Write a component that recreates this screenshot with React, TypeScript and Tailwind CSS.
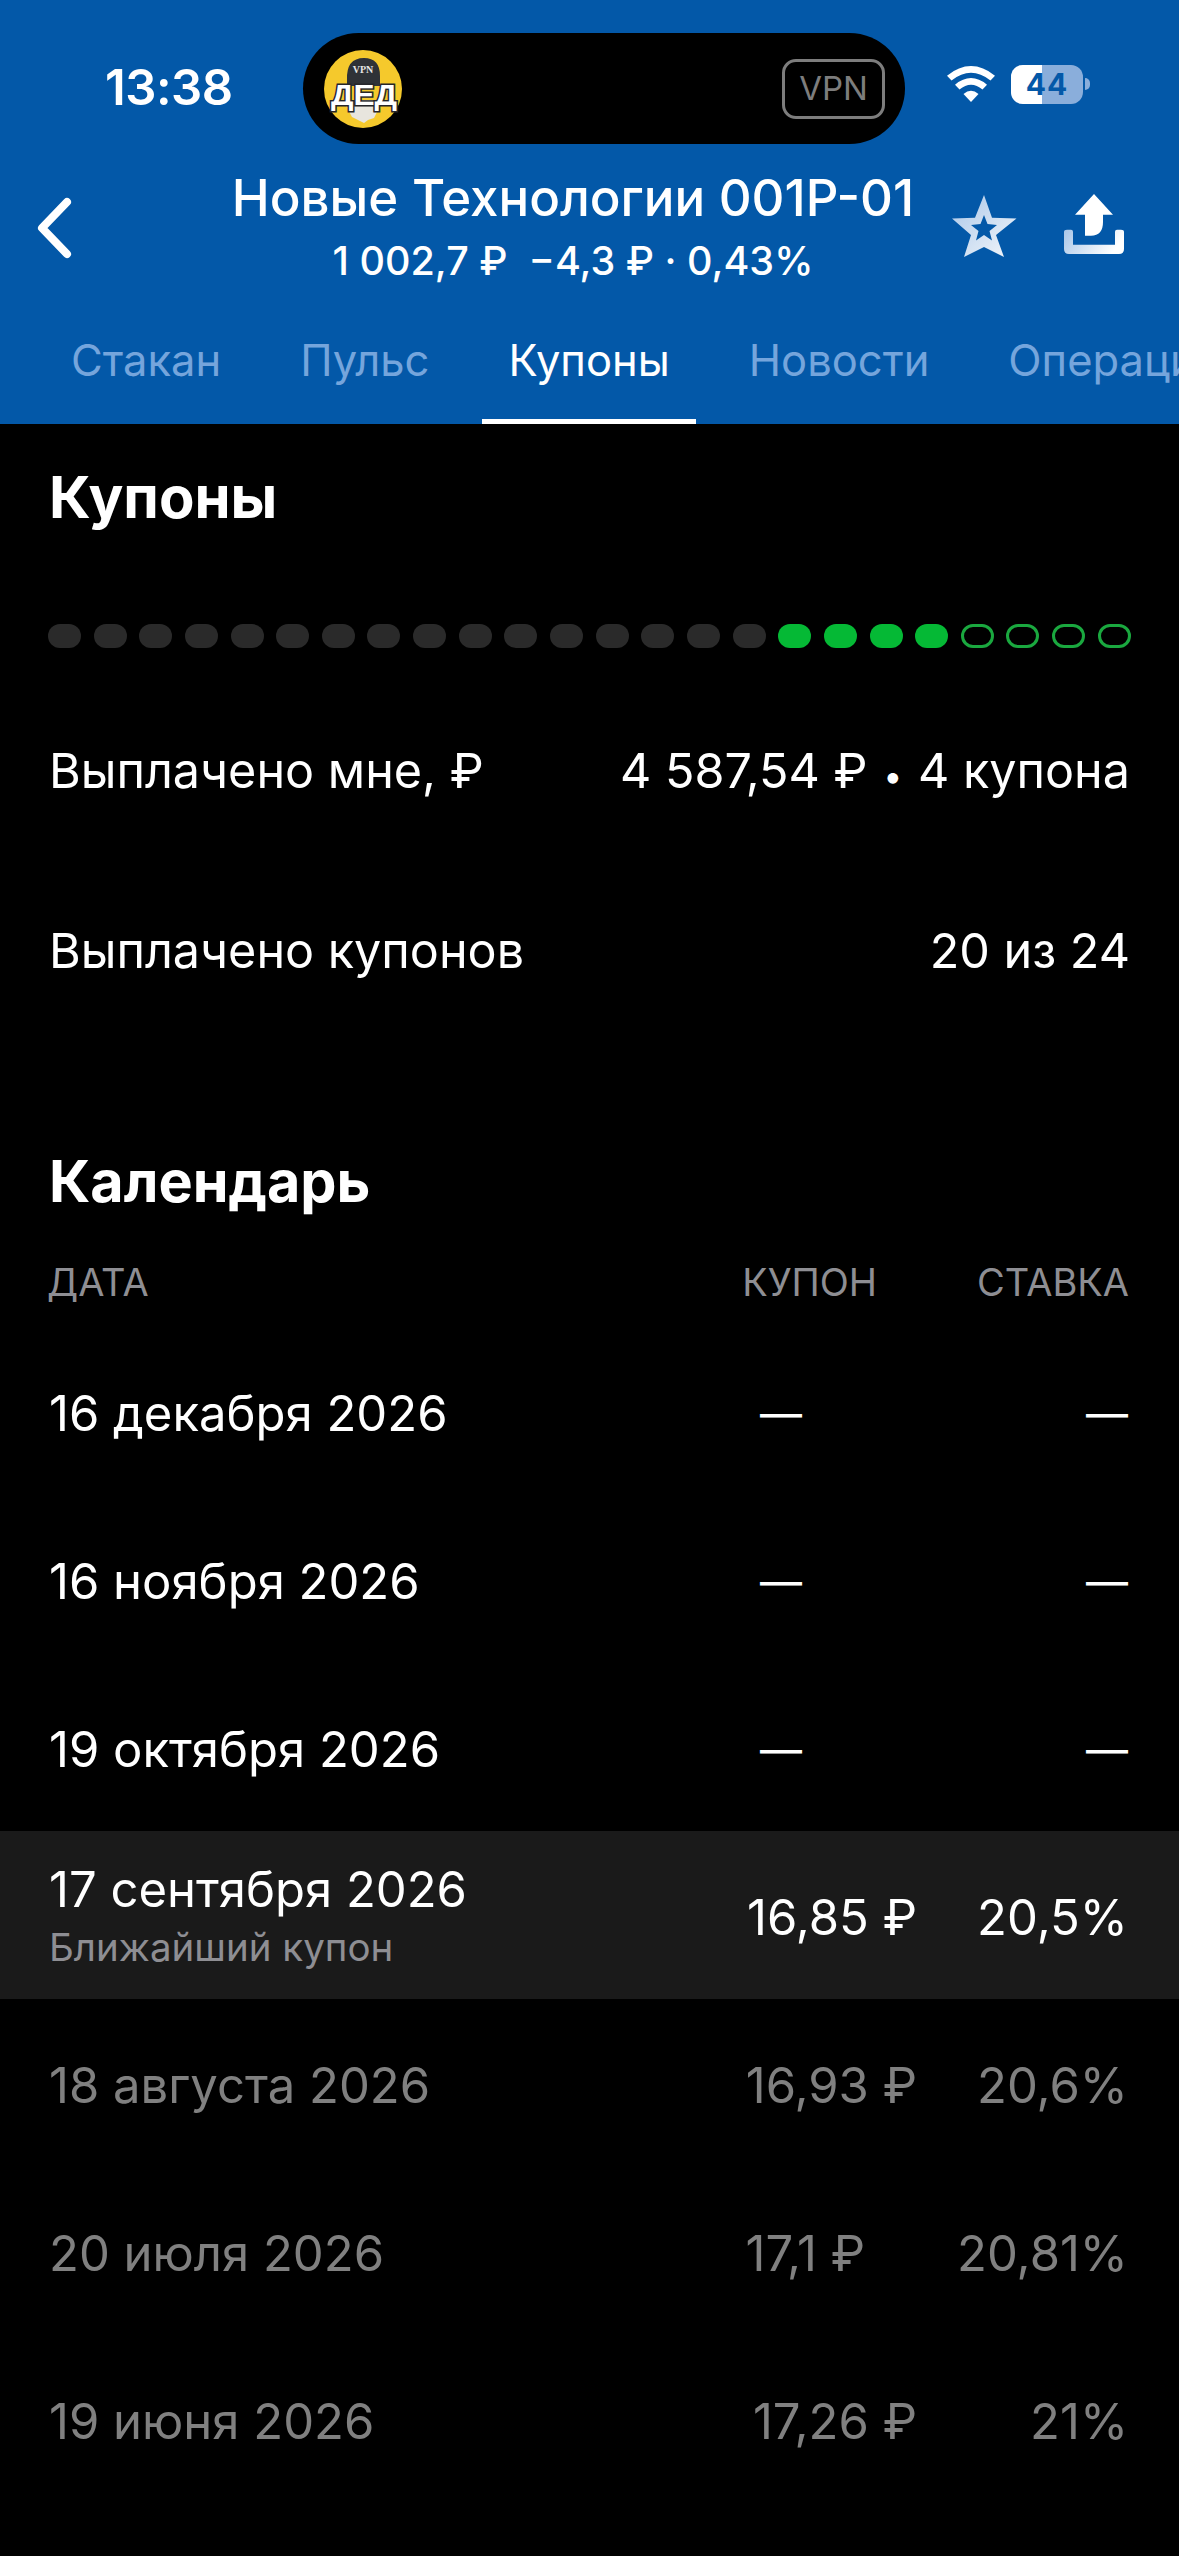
import React from "react";

const FONT = "font-['Inter','Noto_Sans',sans-serif]";

type Row = { date: string; sub?: string; coupon: string; rate: string; tone: "white" | "dim"; couponClass: string };

const rows: Row[] = [
  { date: "16 декабря 2026", coupon: "—", rate: "—", tone: "white", couponClass: "mr-[115px] text-[42px]" },
  { date: "16 ноября 2026", coupon: "—", rate: "—", tone: "white", couponClass: "mr-[115px] text-[42px]" },
  { date: "19 октября 2026", coupon: "—", rate: "—", tone: "white", couponClass: "mr-[115px] text-[42px]" },
  { date: "17 сентября 2026", sub: "Ближайший купон", coupon: "16,85 ₽", rate: "20,5%", tone: "white", couponClass: "mr-0" },
  { date: "18 августа 2026", coupon: "16,93 ₽", rate: "20,6%", tone: "dim", couponClass: "mr-0" },
  { date: "20 июля 2026", coupon: "17,1 ₽", rate: "20,81%", tone: "dim", couponClass: "mr-[52px]" },
  { date: "19 июня 2026", coupon: "17,26 ₽", rate: "21%", tone: "dim", couponClass: "mr-0" },
];

function Avatar() {
  return (
    <svg width="78" height="78" viewBox="0 0 78 78" className="shrink-0">
      <circle cx="39" cy="39" r="39" fill="#f5c92c" />
      <path d="M19 50 L59 50 L50 68 L44 70 L40 73 L36 71 L28 67 Z" fill="#e8e5de" />
      <path d="M23 30 Q22 8 40 8 Q56 8 56 26 L56 36 L23 36 Z" fill="#2f3237" />
      <text x="39" y="23" textAnchor="middle" fontSize="10" fontWeight="700" fill="#e6e6e6" fontFamily="'Liberation Serif',serif">VPN</text>
      <text x="40" y="55" textAnchor="middle" fontSize="30" fontWeight="900" fill="#ffffff" stroke="#26262a" strokeWidth="3" paintOrder="stroke" fontFamily="'Liberation Sans',sans-serif" textLength="66" lengthAdjust="spacingAndGlyphs">ДЕД</text>
    </svg>
  );
}

function Wifi() {
  return (
    <svg width="48" height="36" viewBox="0 0 48 36" className="shrink-0">
      <path d="M24 36 L16.500 28 Q24 21.500 31.500 28 Z" fill="#fff" />
      <path d="M12.500 23.500 L8 18.700 Q24 5.500 40 18.700 L35.500 23.500 Q24 14 12.500 23.500 Z" fill="#fff" />
      <path d="M4.500 14.500 L0 9.700 Q24 -9.500 48 9.700 L43.500 14.500 Q24 -1 4.500 14.500 Z" fill="#fff" />
    </svg>
  );
}

function Battery() {
  return (
    <div className="flex items-center shrink-0">
      <div className="relative w-[72px] h-[39px] rounded-[12px] overflow-hidden bg-[#8aaedb] flex">
        <div className="w-[31px] h-full bg-white" />
        <div className="absolute inset-0 flex items-center justify-center text-[30px] tracking-[1px] leading-none font-bold text-[#0358a8]">44</div>
      </div>
      <div className="w-[5px] h-[12px] ml-[2px] rounded-r-full bg-[#8aaedb]" />
    </div>
  );
}

function Star() {
  return (
    <svg width="66" height="64" viewBox="-1 -1 66 64" className="shrink-0">
      <defs>
        <linearGradient id="starG" x1="0" y1="0" x2="1" y2="1">
          <stop offset="0" stopColor="#a9c6e8" />
          <stop offset="1" stopColor="#f4f7fb" />
        </linearGradient>
      </defs>
      <path
        fillRule="evenodd"
        fill="url(#starG)"
        d="M32 0 L40 22.700 L64.500 23.500 L44 40 L52 62 L32 52 L12 62 L19 40 L0 23.500 L23 22.700 Z M32 20 L28.500 29 L19 30 L26.500 36 L24 45.500 L32 40 L40 45.500 L37.500 36 L45 30 L35.500 29 Z"
      />
    </svg>
  );
}

function Share() {
  return (
    <svg width="60" height="60" viewBox="0 0 60 60" className="shrink-0">
      <defs>
        <linearGradient id="trayG" x1="0" y1="0" x2="1" y2="0.3">
          <stop offset="0" stopColor="#a9c6e8" />
          <stop offset="1" stopColor="#ffffff" />
        </linearGradient>
      </defs>
      <path d="M30 0 L49 20.700 L39 20.700 L39 28 Q39 41.700 27 41.700 L21 41.700 L21 20.700 L11 20.700 Z" fill="#ffffff" />
      <path
        d="M3 35.700 L7 35.700 Q9 35.700 9 37.700 L9 50.700 L51 50.700 L51 37.700 Q51 35.700 53 35.700 L57 35.700 Q60 35.700 60 38 L60 55 Q60 60 55 60 L5 60 Q0 60 0 55 L0 38 Q0 35.700 3 35.700 Z"
        fill="url(#trayG)"
      />
    </svg>
  );
}

function Dots() {
  const kinds = Array.from({ length: 24 }, (_, i) => (i < 16 ? "past" : i < 20 ? "mine" : "future"));
  return (
    <div className="flex justify-between px-[48px] h-[24px]">
      {kinds.map((k, i) => (
        <div
          key={i}
          className={
            k === "past"
              ? "w-[33px] h-[24px] rounded-full bg-[#2a2a2a]"
              : k === "mine"
                ? "w-[33px] h-[24px] rounded-full bg-[#05b935]"
                : "w-[33px] h-[24px] rounded-full border-[3px] border-[#1aa83f]"
          }
        />
      ))}
    </div>
  );
}

export default function App() {
  return (
    <div className={`${FONT} w-[1179px] h-[2556px] bg-black text-white overflow-hidden`}>
      <header className="h-[424px] bg-[#0358a8] flex flex-col">
        <div className="h-[144px] pt-[33px] flex items-start">
          <div className="w-[303px] h-[111px] flex items-center pl-[105px] pb-[2px] text-[49px] font-semibold tracking-[-0.5px] leading-none">13:38</div>
          <div className="w-[602px] h-[111px] rounded-[56px] bg-black flex items-center justify-between pl-[21px] pr-[20px]">
            <Avatar />
            <div className="w-[103px] h-[60px] rounded-[14px] border-[3px] border-[#7d7d7d] flex items-center justify-center text-[33px] leading-none text-[#7d7d7d]">VPN</div>
          </div>
          <div className="h-[111px] flex items-center pl-[42px] gap-[16px] pb-[9px]">
            <Wifi />
            <Battery />
          </div>
        </div>
        <div className="h-[150px] flex">
          <div className="w-[233px] pl-[36px] pt-[53px] shrink-0">
            <svg width="36" height="62" viewBox="0 0 36 62">
              <path d="M31 5 L6 31 L31 57" fill="none" stroke="#fff" strokeWidth="8" strokeLinecap="round" strokeLinejoin="round" />
            </svg>
          </div>
          <div className="w-[680px] shrink-0 flex flex-col items-center">
            <div className="mt-[26px] text-[51px] leading-[56px] font-medium whitespace-nowrap">Новые Технологии 001Р-01</div>
            <div className="mt-[13px] text-[39.500px] leading-[44px] font-medium whitespace-nowrap">1 002,7 ₽&nbsp;&nbsp;−4,3 ₽ · 0,43%</div>
          </div>
          <div className="flex pl-[38px] gap-[47px] pt-[50px] items-start">
            <Star />
            <Share />
          </div>
        </div>
        <nav className="flex-1 flex gap-[79px] text-[43.500px] leading-[52px] text-[#75a5dc] whitespace-nowrap overflow-hidden pl-[71px] pt-[40px]">
          <span>Стакан</span>
          <span>Пульс</span>
          <span className="text-white relative">
            Купоны
            <span className="absolute left-[-26px] right-[-26px] top-[85px] h-[5px] bg-white" />
          </span>
          <span>Новости</span>
          <span>Операции</span>
        </nav>
      </header>

      <main>
        <h2 className="pl-[49px] mt-[42px] text-[58px] leading-[62px] font-bold">Купоны</h2>
        <div className="mt-[96px]">
          <Dots />
        </div>
        <div className="mt-[94px] h-[58px] px-[49px] flex justify-between text-[48.500px] leading-[58px]">
          <span>Выплачено мне, ₽</span>
          <span>
            4 587,54 ₽ <span className="text-[34px] leading-none mx-[2px]">•</span> 4 купона
          </span>
        </div>
        <div className="mt-[122px] px-[49px] flex justify-between text-[48.500px] leading-[58px]">
          <span>Выплачено купонов</span>
          <span>20 из 24</span>
        </div>
        <h2 className="pl-[49px] mt-[170px] text-[57.500px] leading-[62px] font-bold">Календарь</h2>
        <div className="mt-[47px] pl-[47px] pr-[50px] flex text-[38px] leading-[46px] text-[#8e8e93]">
          <span className="flex-1">ДАТА</span>
          <span className="mr-[100px]">КУПОН</span>
          <span>СТАВКА</span>
        </div>
        <div className="mt-[22px]">
          {rows.map((r) => (
            <div
              key={r.date}
              className={`h-[168px] pl-[49px] pr-[51px] flex items-center text-[49px] leading-[58px] ${
                r.sub ? "bg-[#1a1a1a]" : ""
              } ${r.tone === "dim" ? "text-[#808080]" : "text-white"}`}
            >
              <div className={`flex-1 flex flex-col ${r.sub ? "" : "pt-[6px]"}`}>
                <span>{r.date}</span>
                {r.sub && <span className="mt-[5px] text-[38.500px] leading-[46px] text-[#8e8e93]">{r.sub}</span>}
              </div>
              <span className={`pt-[6px] ${r.couponClass}`}>{r.coupon}</span>
              <span className={`pt-[6px] w-[211px] text-right shrink-0 ${r.rate === "—" ? "text-[42px]" : ""}`}>{r.rate}</span>
            </div>
          ))}
        </div>
      </main>
    </div>
  );
}
